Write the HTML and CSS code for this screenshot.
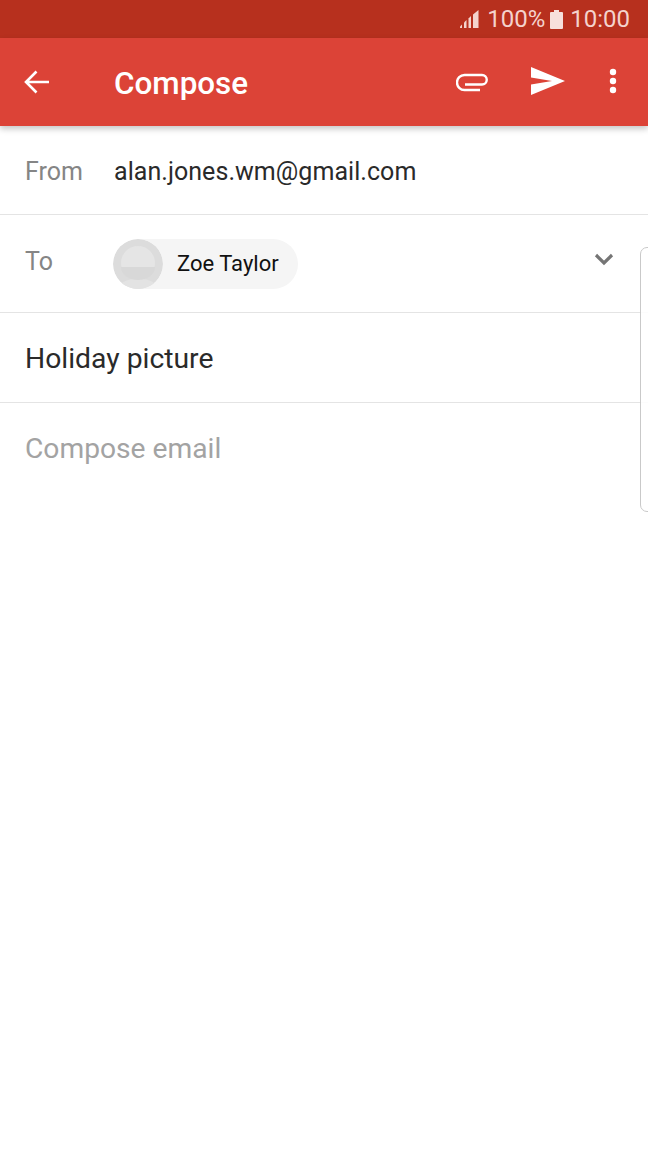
FILE: index.html
```html
<!DOCTYPE html>
<html lang="en">
<head>
    <meta charset="UTF-8">
    <meta name="viewport" content="width=device-width, initial-scale=1.0">
    <title>Compose</title>
    <link rel="stylesheet" href="styles.css">
</head>
<body>
    <div class="status-bar">
        <svg class="signal" width="20" height="20" viewBox="0 0 20 20">
            <path d="M0 17.500L2 15.500V19H0z"/>
            <path d="M4 13.500L6.500 11V19H4z"/>
            <path d="M8.500 9.500L11 7V19H8.500z"/>
            <path d="M13 5.500L18.500 1V19H13z"/>
        </svg>
        <span class="status-text">100%</span>
        <svg class="battery" width="13" height="19" viewBox="0 0 13 19">
            <path d="M4 0h5v2h3a1 1 0 0 1 1 1v15a1 1 0 0 1-1 1H1a1 1 0 0 1-1-1V3a1 1 0 0 1 1-1h3z"/>
        </svg>
        <span class="status-text">10:00</span>
    </div>
    <header class="app-bar">
        <svg class="back" width="28" height="26" viewBox="0 0 28 26">
            <path d="M26 13H3M13.500 2.500L3 13l10.500 10.500" fill="none" stroke="#fff" stroke-width="2.600"/>
        </svg>
        <h1 class="title">Compose</h1>
        <svg class="attach" width="32" height="19" viewBox="0 0 32 19">
            <path d="M9 11.500H26a4.700 4.700 0 0 0 0-9.500H8.500a7.500 7.500 0 0 0 0 15H24" fill="none" stroke="#fff" stroke-width="2.400"/>
        </svg>
        <svg class="send" width="36" height="30" viewBox="0 0 36 30">
            <path d="M1 1l34 14L1 29v-10.500L22 15 1 11.500z" fill="#fff"/>
        </svg>
        <svg class="more" width="8" height="26" viewBox="0 0 8 26">
            <circle cx="4" cy="4" r="3.200" fill="#fff"/>
            <circle cx="4" cy="13" r="3.200" fill="#fff"/>
            <circle cx="4" cy="22" r="3.200" fill="#fff"/>
        </svg>
    </header>
    <main class="form">
        <div class="row from-row">
            <span class="label">From</span>
            <span class="value">alan.jones.wm@gmail.com</span>
        </div>
        <div class="row to-row">
            <span class="label">To</span>
            <div class="chip">
                <svg class="avatar" width="50" height="50" viewBox="0 0 50 50">
                    <defs>
                        <clipPath id="avatar-clip"><circle cx="25" cy="25" r="25"/></clipPath>
                    </defs>
                    <g clip-path="url(#avatar-clip)">
                        <circle cx="25" cy="25" r="25" fill="#dcdcdc"/>
                        <path d="M7 46c4-5 10-6 18-6s14 1 18 6v6H7z" fill="#e3e3e3"/>
                        <circle cx="25" cy="24" r="17" fill="#e5e5e5"/>
                        <path d="M8 28h34a17 13 0 0 1-34 0z" fill="#d8d8d8"/>
                    </g>
                </svg>
                <span class="chip-name">Zoe Taylor</span>
            </div>
            <svg class="chevron" width="20" height="13" viewBox="0 0 20 13">
                <path d="M2 2l8 8 8-8" fill="none" stroke="#757575" stroke-width="3.200"/>
            </svg>
        </div>
        <div class="row subject-row">Holiday picture</div>
        <div class="body-placeholder">Compose email</div>
    </main>
    <div class="edge-panel"></div>
</body>
</html>
```
FILE: styles.css
```css
* {
    box-sizing: border-box;
}
html, body {
    height: 100%;
}
body {
    margin: 0;
    height: 1152px;
    overflow: hidden;
    position: relative;
    background: #fff;
    font-family: Roboto, "Liberation Sans", sans-serif;
}
.status-bar {
    height: 38px;
    background: #b7301e;
    display: flex;
    align-items: center;
    justify-content: flex-end;
    padding-right: 18px;
    color: #f4d3cd;
}
.status-text {
    font-size: 24px;
    line-height: 38px;
}
.signal {
    fill: #f4d3cd;
    margin-right: 7px;
}
.battery {
    fill: #f7e0dc;
    margin: 0 7px 0 5px;
}
.app-bar {
    height: 88px;
    background: #dc4337;
    display: flex;
    align-items: center;
    position: relative;
    box-shadow: 0 3px 6px rgba(0, 0, 0, 0.22);
}
.back {
    margin: 0 0 0 23px;
    flex: none;
}
.title {
    margin: 2px 0 0 63px;
    font-size: 31.400px;
    font-weight: 500;
    color: #fff;
    flex: 1;
}
.attach {
    margin: 0 42px 0 0;
}
.send {
    margin: 0 43px 2px 0;
}
.more {
    margin: 0 31px 2px 0;
}
.row {
    display: flex;
    align-items: center;
    border-bottom: 1px solid #e4e4e4;
    padding-left: 25px;
}
.from-row {
    height: 89px;
    padding-top: 2px;
}
.to-row {
    height: 98px;
    position: relative;
    align-items: flex-start;
}
.label {
    width: 89px;
    font-size: 25px;
    color: #858585;
}
.to-row .label {
    width: 88px;
    margin-top: 32px;
}
.value {
    font-size: 25px;
    letter-spacing: 0.05px;
    color: #2a2a2a;
}
.chip {
    margin-top: 24px;
    height: 50px;
    width: 185px;
    border-radius: 25px;
    background: #f5f5f5;
    display: flex;
    align-items: center;
}
.avatar {
    flex: none;
}
.chip-name {
    margin: 0 0 2px 14px;
    font-size: 22px;
    color: #111;
}
.chevron {
    position: absolute;
    left: 594px;
    top: 38px;
}
.subject-row {
    height: 90px;
    padding-top: 2px;
    font-size: 28.300px;
    color: #2a2a2a;
}
.body-placeholder {
    padding: 29px 0 0 25px;
    font-size: 28.200px;
    color: #a3a3a3;
}
.edge-panel {
    position: absolute;
    top: 247px;
    left: 640px;
    width: 20px;
    height: 265px;
    border: 1px solid #c4c4c4;
    border-radius: 7px;
    background: #fff;
    opacity: 0.9;
}
```
